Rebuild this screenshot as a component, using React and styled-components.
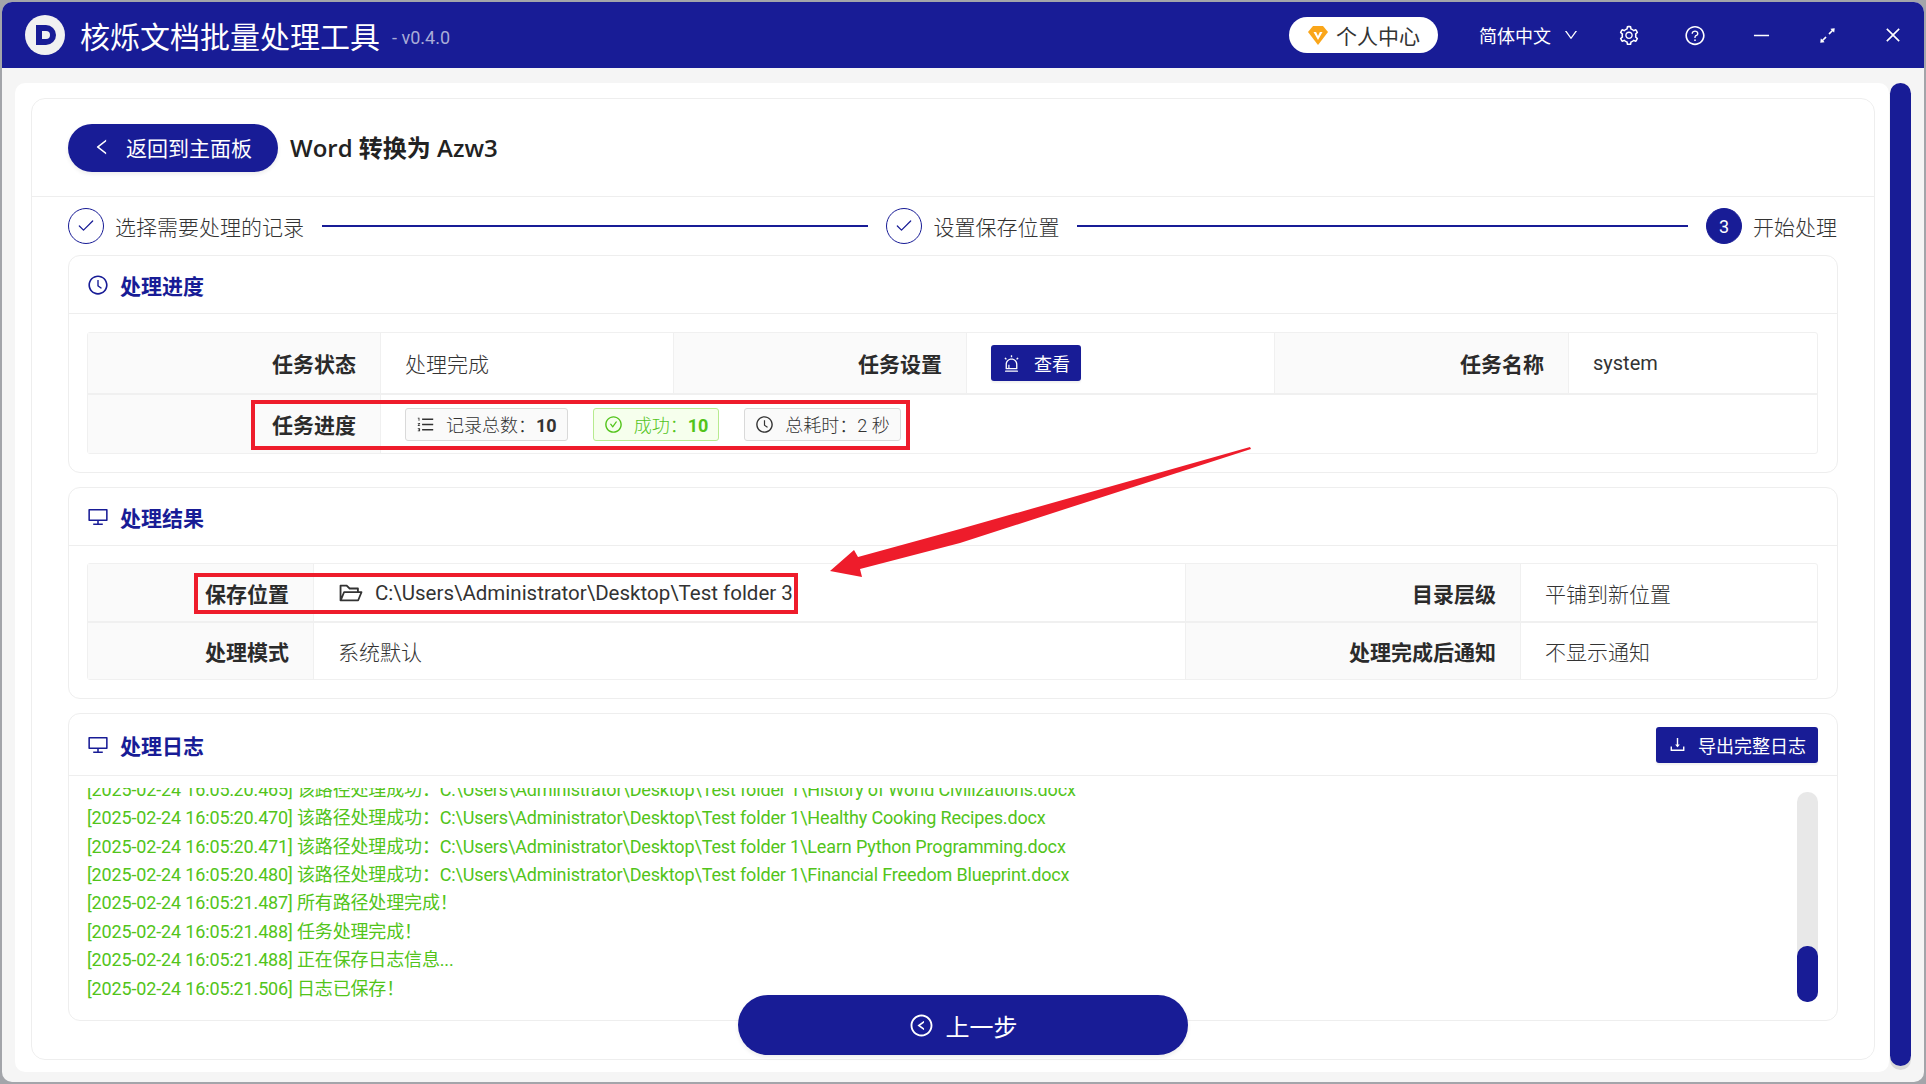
import React from 'react';
import styled, { createGlobalStyle } from 'styled-components';
import {
  AiOutlineAlert,
  AiOutlineArrowsAlt,
  AiOutlineCheckCircle,
  AiOutlineClockCircle,
  AiOutlineClose,
  AiOutlineDesktop,
  AiOutlineDown,
  AiOutlineDownload,
  AiOutlineFolderOpen,
  AiOutlineLeft,
  AiOutlineLeftCircle,
  AiOutlineMinus,
  AiOutlineOrderedList,
  AiOutlineQuestionCircle,
  AiOutlineSetting,
} from 'react-icons/ai';
import { Check } from 'lucide-react';

const BLUE = '#181c96';
const GREEN = '#52c41a';
const LINE = '#f0f0f0';

const GlobalStyle = createGlobalStyle`
  html, body {
    margin: 0;
    padding: 0;
    background: #a3a5aa;
  }
  * {
    box-sizing: border-box;
  }
`;

const logRows = [
  '[2025-02-24 16:05:20.465] 该路径处理成功：C:\\Users\\Administrator\\Desktop\\Test folder 1\\History of World Civilizations.docx',
  '[2025-02-24 16:05:20.470] 该路径处理成功：C:\\Users\\Administrator\\Desktop\\Test folder 1\\Healthy Cooking Recipes.docx',
  '[2025-02-24 16:05:20.471] 该路径处理成功：C:\\Users\\Administrator\\Desktop\\Test folder 1\\Learn Python Programming.docx',
  '[2025-02-24 16:05:20.480] 该路径处理成功：C:\\Users\\Administrator\\Desktop\\Test folder 1\\Financial Freedom Blueprint.docx',
  '[2025-02-24 16:05:21.487] 所有路径处理完成！',
  '[2025-02-24 16:05:21.488] 任务处理完成！',
  '[2025-02-24 16:05:21.488] 正在保存日志信息...',
  '[2025-02-24 16:05:21.506] 日志已保存！',
];

function Logo() {
  return (
    <LogoMark viewBox="0 0 40 40">
      <circle cx="20" cy="20" r="20" fill="#f1f1f1" />
      <path d="M11 10h10a10 10 0 0 1 0 20H11z" fill={BLUE} />
      <path d="M17 16h4a4 4 0 0 1 0 8h-4z" fill="#f1f1f1" />
    </LogoMark>
  );
}

function Diamond() {
  return (
    <svg width="20" height="20" viewBox="0 0 20 20">
      <path d="M5 1h10l5 6-10 13L0 7z" fill="#faa61a" />
      <path d="M5.5 7h2.6L10 11l1.9-4h2.6L10 15z" fill="#fff" />
    </svg>
  );
}

export default function App() {
  return (
    <Page>
      <GlobalStyle />
      <Win>
        <TitleBar>
          <Logo />
          <AppName>核烁文档批量处理工具</AppName>
          <Version>- v0.4.0</Version>
          <BarRight>
            <UserPill>
              <Diamond />
              <span>个人中心</span>
            </UserPill>
            <Lang>
              简体中文
              <AiOutlineDown size={16} />
            </Lang>
            <BarIcons>
              <BarIcon><AiOutlineSetting size={23} /></BarIcon>
              <BarIcon><AiOutlineQuestionCircle size={23} /></BarIcon>
              <BarIcon><AiOutlineMinus size={21} /></BarIcon>
              <BarIcon><AiOutlineArrowsAlt size={21} /></BarIcon>
              <BarIcon><AiOutlineClose size={20} /></BarIcon>
            </BarIcons>
          </BarRight>
        </TitleBar>

        <Content>
          <Panel>
            <MainCard>
              <TopRow>
                <BackButton>
                  <AiOutlineLeft size={20} />
                  返回到主面板
                </BackButton>
                <PageTitle>Word 转换为 Azw3</PageTitle>
              </TopRow>

              <Steps>
                <StepCircle><Check size={20} strokeWidth={1.5} /></StepCircle>
                <StepText>选择需要处理的记录</StepText>
                <StepLine $grow={546} />
                <StepCircle><Check size={20} strokeWidth={1.5} /></StepCircle>
                <StepText>设置保存位置</StepText>
                <StepLine $grow={610} />
                <StepCircle $active>3</StepCircle>
                <StepText>开始处理</StepText>
              </Steps>

              <Sections>
                <Section>
                  <SectionHead>
                    <SectionTitle>
                      <AiOutlineClockCircle size={22} />
                      处理进度
                    </SectionTitle>
                  </SectionHead>
                  <InfoTable $cols="293px 293px 293px 308px 294px 1fr" $rows="62px 1fr" $h={122} $mt={18}>
                    <Label>任务状态</Label>
                    <Value>处理完成</Value>
                    <Label>任务设置</Label>
                    <Value>
                      <ViewButton>
                        <AiOutlineAlert size={19} />
                        查看
                      </ViewButton>
                    </Value>
                    <Label>任务名称</Label>
                    <LatinValue $last>system</LatinValue>
                    <Label $bottom>任务进度</Label>
                    <TagsCell $bottom>
                      <Tag>
                        <AiOutlineOrderedList size={19} />
                        <span>记录总数：<b>10</b></span>
                      </Tag>
                      <Tag $ok>
                        <AiOutlineCheckCircle size={19} />
                        <span>成功：<b>10</b></span>
                      </Tag>
                      <Tag>
                        <AiOutlineClockCircle size={19} />
                        <span>总耗时：2 秒</span>
                      </Tag>
                    </TagsCell>
                  </InfoTable>
                </Section>

                <Section>
                  <SectionHead>
                    <SectionTitle>
                      <AiOutlineDesktop size={22} />
                      处理结果
                    </SectionTitle>
                  </SectionHead>
                  <InfoTable $cols="226px 872px 335px 1fr" $rows="59px 1fr" $h={117} $mt={17}>
                    <Label>保存位置</Label>
                    <Value>
                      <PathText>
                        <AiOutlineFolderOpen size={26} />
                        C:\Users\Administrator\Desktop\Test folder 3
                      </PathText>
                    </Value>
                    <Label>目录层级</Label>
                    <Value $last>平铺到新位置</Value>
                    <Label $bottom>处理模式</Label>
                    <Value $bottom>系统默认</Value>
                    <Label $bottom>处理完成后通知</Label>
                    <Value $bottom $last>不显示通知</Value>
                  </InfoTable>
                </Section>

                <LogSection>
                  <SectionHead $tall>
                    <SectionTitle>
                      <AiOutlineDesktop size={22} />
                      处理日志
                    </SectionTitle>
                    <ExportButton>
                      <AiOutlineDownload size={19} />
                      导出完整日志
                    </ExportButton>
                  </SectionHead>
                  <LogBody>
                    <LogList>
                      {logRows.map((row, i) => (
                        <LogRow key={i}>{row}</LogRow>
                      ))}
                    </LogList>
                    <LogTrack>
                      <LogThumb />
                    </LogTrack>
                  </LogBody>
                </LogSection>
              </Sections>
            </MainCard>
          </Panel>
          <PageScroll />
        </Content>
      </Win>

      <PrevButton>
        <AiOutlineLeftCircle size={25} />
        上一步
      </PrevButton>

      <RedBox $x={251} $y={400} $w={659} $h={50} />
      <RedBox $x={194} $y={573} $w={604} $h={41} />
      <ArrowLayer viewBox="0 0 1926 1084">
        <path d="M1250 447 L960 529 L858 557 L854 550 L830 571 L862 577 L860 569 L960 543 L1251 449 Z" fill="#ee1c2b" />
      </ArrowLayer>
    </Page>
  );
}

const Page = styled.div`
  position: relative;
  width: 1926px;
  height: 1084px;
  padding: 2px;
  overflow: hidden;
  font-family: Roboto, "Noto Sans CJK SC", sans-serif;
  color: #333;
`;

const Win = styled.div`
  display: flex;
  flex-direction: column;
  height: 100%;
  background: #f5f5f5;
  border-radius: 10px;
  overflow: hidden;
`;

const TitleBar = styled.header`
  display: flex;
  align-items: center;
  flex: none;
  height: 66px;
  padding-left: 23px;
  background: ${BLUE};
  color: #fff;
`;

const LogoMark = styled.svg`
  flex: none;
  width: 40px;
  height: 40px;
  margin-right: 15px;
`;

const AppName = styled.div`
  font-size: 30px;
  white-space: nowrap;
`;

const Version = styled.div`
  margin-left: 12px;
  margin-top: 4px;
  font-size: 18px;
  color: #a9acd8;
`;

const BarRight = styled.div`
  display: flex;
  align-items: center;
  margin-left: auto;
`;

const UserPill = styled.div`
  display: flex;
  align-items: center;
  gap: 8px;
  width: 149px;
  height: 36px;
  padding-left: 19px;
  border-radius: 18px;
  background: #fff;
  color: #333;
  font-size: 21px;
`;

const Lang = styled.div`
  display: flex;
  align-items: center;
  gap: 12px;
  margin-left: 41px;
  font-size: 18px;
`;

const BarIcons = styled.div`
  display: flex;
  gap: 44px;
  margin-left: 39px;
  margin-right: 20px;
`;

const BarIcon = styled.div`
  display: flex;
  align-items: center;
  justify-content: center;
  width: 22px;
  height: 24px;
`;

const Content = styled.main`
  display: flex;
  gap: 1px;
  flex: 1;
  min-height: 0;
  padding: 15px 13px 10px 13px;
`;

const Panel = styled.div`
  flex: 1;
  min-width: 0;
  padding: 15px 14px 12px 16px;
  background: #fff;
  border-radius: 10px;
`;

const PageScroll = styled.div`
  flex: none;
  width: 21px;
  height: 983px;
  border-radius: 11px;
  background: ${BLUE};
  box-shadow: 0 4px 0 #d9d9d9;
`;

const MainCard = styled.div`
  height: 100%;
  border: 1px solid #eeeeee;
  border-radius: 14px;
`;

const TopRow = styled.div`
  display: flex;
  align-items: center;
  gap: 12px;
  height: 98px;
  padding-left: 36px;
  border-bottom: 1px solid #eeeeee;
`;

const BackButton = styled.button`
  display: flex;
  align-items: center;
  gap: 14px;
  width: 210px;
  height: 48px;
  padding: 0 0 2px 24px;
  border: none;
  border-radius: 24px;
  background: ${BLUE};
  color: #fff;
  font: inherit;
  font-size: 21px;
  box-shadow: 0 2px 4px rgba(0, 0, 0, 0.08);
`;

const PageTitle = styled.h1`
  margin: 0 0 2px;
  font-family: "Open Sans", "Noto Sans CJK SC", sans-serif;
  font-size: 24px;
  font-weight: 600;
  color: #222;
`;

const Steps = styled.div`
  display: flex;
  align-items: center;
  height: 58px;
  padding: 0 37px 0 36px;
`;

const StepCircle = styled.div`
  display: flex;
  align-items: center;
  justify-content: center;
  flex: none;
  width: 36px;
  height: 36px;
  border: 1px solid ${BLUE};
  border-radius: 50%;
  background: ${p => (p.$active ? BLUE : '#fff')};
  color: ${p => (p.$active ? '#fff' : BLUE)};
  font-size: 18px;
`;

const StepText = styled.div`
  flex: none;
  margin-left: 11px;
  font-size: 21px;
  font-weight: 300;
  color: #333;
`;

const StepLine = styled.div`
  flex: ${p => p.$grow} 1 0;
  height: 2px;
  margin: 0 18px;
  background: ${BLUE};
`;

const Sections = styled.div`
  display: flex;
  flex-direction: column;
  gap: 14px;
  padding: 0 36px;
`;

const Section = styled.section`
  border: 1px solid #eeeeee;
  border-radius: 12px;
  padding-bottom: 18px;
`;

const LogSection = styled.section`
  border: 1px solid #eeeeee;
  border-radius: 12px;
  height: 308px;
`;

const SectionHead = styled.div`
  display: flex;
  align-items: center;
  justify-content: space-between;
  height: ${p => (p.$tall ? '62px' : '58px')};
  padding: 0 19px 0 18px;
  border-bottom: 1px solid #eeeeee;
`;

const SectionTitle = styled.h2`
  display: flex;
  align-items: center;
  gap: 11px;
  margin: 0;
  font-size: 21px;
  font-weight: 700;
  color: ${BLUE};
`;

const InfoTable = styled.div`
  display: grid;
  grid-template-columns: ${p => p.$cols};
  grid-template-rows: ${p => p.$rows};
  height: ${p => p.$h}px;
  margin: ${p => p.$mt}px 19px 0 18px;
  border: 1px solid ${LINE};
  border-radius: 3px;
`;

const Label = styled.div`
  display: flex;
  align-items: center;
  justify-content: flex-end;
  padding-right: 24px;
  background: #fafafa;
  border-right: 1px solid ${LINE};
  border-bottom: ${p => (p.$bottom ? 'none' : `2px solid ${LINE}`)};
  font-size: 21px;
  font-weight: 700;
  color: #2b2b2b;
`;

const Value = styled.div`
  display: flex;
  align-items: center;
  padding-left: 24px;
  border-right: ${p => (p.$last ? 'none' : `1px solid ${LINE}`)};
  border-bottom: ${p => (p.$bottom ? 'none' : `2px solid ${LINE}`)};
  font-size: 21px;
  font-weight: 300;
  color: #333;
`;

const LatinValue = styled(Value)`
  font-size: 20px;
  font-weight: 400;
`;

const TagsCell = styled(Value)`
  grid-column: span 5;
  gap: 25px;
  border-right: none;
`;

const Tag = styled.div`
  display: flex;
  align-items: center;
  gap: 11px;
  height: 33px;
  padding: 0 10px;
  border: 1px solid ${p => (p.$ok ? '#b7eb8f' : '#d9d9d9')};
  border-radius: 3px;
  background: ${p => (p.$ok ? '#f6ffed' : '#fafafa')};
  color: ${p => (p.$ok ? GREEN : '#333')};
  font-size: 18px;
  b {
    font-weight: 700;
  }
`;

const ViewButton = styled.button`
  display: flex;
  align-items: center;
  gap: 13px;
  width: 90px;
  height: 36px;
  padding: 0 0 0 11px;
  border: none;
  border-radius: 3px;
  background: ${BLUE};
  color: #fff;
  font: inherit;
  font-size: 18px;
  font-weight: 400;
  box-shadow: 0 2px 2px rgba(0, 0, 0, 0.06);
`;

const PathText = styled.div`
  display: flex;
  align-items: center;
  gap: 11px;
  font-size: 20.5px;
  font-weight: 400;
  color: #333;
`;

const ExportButton = styled(ViewButton)`
  gap: 11px;
  width: 162px;
  padding-left: 12px;
`;

const LogBody = styled.div`
  display: flex;
  padding: 0 19px 0 18px;
`;

const LogList = styled.div`
  display: flex;
  flex-direction: column;
  justify-content: flex-end;
  flex: 1;
  height: 215px;
  margin-top: 12px;
  overflow: hidden;
`;

const LogRow = styled.div`
  flex: none;
  height: 28.4px;
  line-height: 28.4px;
  font-size: 18px;
  letter-spacing: -0.15px;
  color: ${GREEN};
  white-space: nowrap;
`;

const LogTrack = styled.div`
  display: flex;
  align-items: flex-end;
  flex: none;
  width: 21px;
  height: 210px;
  margin-top: 16px;
  border-radius: 10px;
  background: #e8e8e8;
`;

const LogThumb = styled.div`
  width: 100%;
  height: 56px;
  border-radius: 10px;
  background: ${BLUE};
`;

const PrevButton = styled.button`
  position: absolute;
  left: 738px;
  top: 995px;
  display: flex;
  align-items: center;
  justify-content: center;
  gap: 12px;
  width: 450px;
  height: 60px;
  border: none;
  border-radius: 30px;
  background: ${BLUE};
  color: #fff;
  font: inherit;
  font-size: 24px;
  box-shadow: 0 2px 4px rgba(0, 0, 0, 0.08);
`;

const RedBox = styled.div`
  position: absolute;
  left: ${p => p.$x}px;
  top: ${p => p.$y}px;
  width: ${p => p.$w}px;
  height: ${p => p.$h}px;
  border: 4px solid #ee1c2b;
  pointer-events: none;
`;

const ArrowLayer = styled.svg`
  position: absolute;
  left: 0;
  top: 0;
  width: 1926px;
  height: 1084px;
  pointer-events: none;
`;
